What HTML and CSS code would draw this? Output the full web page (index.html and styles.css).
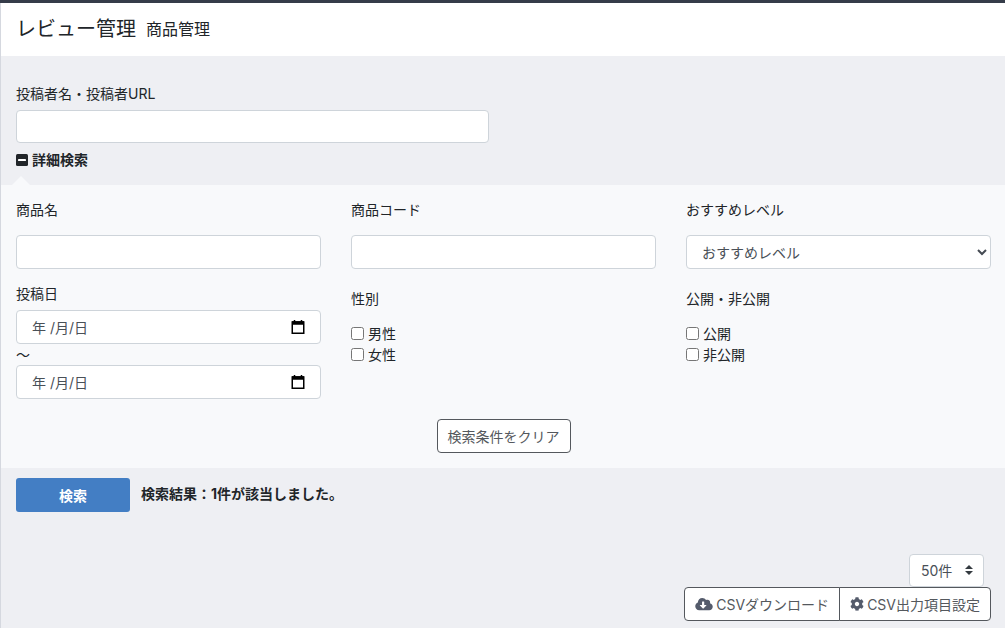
FILE: index.html
```html
<!DOCTYPE html>
<html lang="ja">
<head>
<meta charset="utf-8">
<meta name="viewport" content="width=device-width, initial-scale=1">
<title>レビュー管理</title>
<link rel="stylesheet" href="styles.css">
</head>
<body>
<header class="page-head">
  <h1 class="page-title">レビュー管理</h1>
  <span class="page-subtitle">商品管理</span>
</header>
<main>
  <form class="search">
    <section class="search-main">
      <label class="label" for="author">投稿者名・投稿者URL</label>
      <input class="control author" id="author" type="text">
      <button class="toggle" type="button">
        <svg class="toggle-icon" viewBox="0 0 12 12" aria-hidden="true"><rect width="12" height="12" rx="1.5" fill="#212529"/><rect x="2" y="5" width="8" height="2" rx=".4" fill="#fff"/></svg>
        詳細検索
      </button>
    </section>
    <section class="detail">
      <div class="grid">
        <div class="field">
          <label class="label" for="name">商品名</label>
          <input class="control" id="name" type="text">
        </div>
        <div class="field">
          <label class="label" for="code">商品コード</label>
          <input class="control" id="code" type="text">
        </div>
        <div class="field">
          <label class="label" for="level">おすすめレベル</label>
          <div class="select-wrap">
            <select class="control level" id="level"><option>おすすめレベル</option></select>
            <svg class="chevron" viewBox="0 0 10 7" aria-hidden="true"><path d="M1 1l4 4 4-4" fill="none" stroke="#454b53" stroke-width="2"/></svg>
          </div>
        </div>
        <div class="dates">
          <label class="label" for="from">投稿日</label>
          <div class="date">
            <input class="control" id="from" type="text" placeholder="年 /月/日">
            <button class="calendar" type="button" aria-label="開始日を選択"><svg viewBox="0 0 14 15" aria-hidden="true"><path d="M3.500 0v2M10.500 0v2" stroke="#000" stroke-width="1.500"/><path d="M1.250 2h11.500v11.250H1.250z" fill="none" stroke="#000" stroke-width="1.500"/><path d="M1 1.250h12v3.500H1z"/></svg></button>
          </div>
          <span class="tilde">〜</span>
          <div class="date">
            <input class="control" type="text" placeholder="年 /月/日" aria-label="投稿日（終了）">
            <button class="calendar" type="button" aria-label="終了日を選択"><svg viewBox="0 0 14 15" aria-hidden="true"><path d="M3.500 0v2M10.500 0v2" stroke="#000" stroke-width="1.500"/><path d="M1.250 2h11.500v11.250H1.250z" fill="none" stroke="#000" stroke-width="1.500"/><path d="M1 1.250h12v3.500H1z"/></svg></button>
          </div>
        </div>
        <fieldset class="checks">
          <legend class="label">性別</legend>
          <label class="check"><input type="checkbox">男性</label>
          <label class="check"><input type="checkbox">女性</label>
        </fieldset>
        <fieldset class="checks">
          <legend class="label">公開・非公開</legend>
          <label class="check"><input type="checkbox">公開</label>
          <label class="check"><input type="checkbox">非公開</label>
        </fieldset>
      </div>
      <button class="btn clear" type="reset">検索条件をクリア</button>
    </section>
    <div class="submit-row">
      <button class="submit" type="button">検索</button>
      <span class="result">検索結果：1件が該当しました。</span>
    </div>
  </form>
  <section class="tools">
    <div class="select-wrap count-wrap">
      <select class="count" aria-label="表示件数"><option>50件</option></select>
      <svg class="sorter" viewBox="0 0 8 10" aria-hidden="true"><path d="M4 0l4 4H0zM4 10l4-4H0z" fill="#343a40"/></svg>
    </div>
    <div class="group">
      <button class="btn" type="button">
        <svg class="cloud" viewBox="0 0 640 512" aria-hidden="true"><path fill="#545b6b" d="M537.600 226.600c4.100-10.700 6.400-22.400 6.400-34.600 0-53-43-96-96-96-19.700 0-38.100 6-53.300 16.200C367 64.200 315.300 32 256 32c-88.400 0-160 71.600-160 160 0 2.700.1 5.400.2 8.100C40.200 219.800 0 273.200 0 336c0 79.500 64.500 144 144 144h368c70.700 0 128-57.300 128-128 0-61.900-44-113.600-102.400-125.400zm-132.900 88.700L299.300 420.700c-6.200 6.200-16.400 6.200-22.600 0L171.300 315.300c-10.100-10.100-2.900-27.300 11.300-27.300H248V176c0-8.800 7.200-16 16-16h48c8.800 0 16 7.200 16 16v112h65.400c14.200 0 21.400 17.200 11.300 27.300z"/></svg>CSVダウンロード
      </button>
      <button class="btn" type="button">
        <svg class="gear" viewBox="0 0 512 512" aria-hidden="true"><path fill="#545b6b" d="M487.400 315.700l-42.600-24.600c4.300-23.200 4.300-47 0-70.200l42.600-24.600c4.900-2.800 7.100-8.600 5.500-14-11.100-35.600-30-67.800-54.700-94.600-3.800-4.100-10-5.100-14.800-2.300L380.800 110c-17.900-15.400-38.500-27.300-60.800-35.100V25.800c0-5.600-3.900-10.500-9.400-11.700-36.700-8.200-74.300-7.800-109.200 0-5.500 1.200-9.400 6.100-9.400 11.700V75c-22.200 7.900-42.800 19.800-60.800 35.100L88.700 85.500c-4.900-2.800-11-1.900-14.800 2.300-24.700 26.700-43.600 58.900-54.700 94.600-1.700 5.400.6 11.200 5.500 14L67.300 221c-4.300 23.200-4.300 47 0 70.200l-42.600 24.600c-4.900 2.800-7.100 8.600-5.500 14 11.100 35.600 30 67.800 54.700 94.600 3.800 4.100 10 5.100 14.800 2.300l42.600-24.600c17.900 15.400 38.500 27.300 60.800 35.100v49.200c0 5.600 3.900 10.500 9.400 11.700 36.700 8.200 74.300 7.800 109.200 0 5.500-1.200 9.400-6.100 9.400-11.700v-49.200c22.200-7.900 42.800-19.800 60.800-35.100l42.600 24.600c4.900 2.800 11 1.900 14.800-2.300 24.700-26.700 43.600-58.900 54.700-94.600 1.500-5.500-.7-11.300-5.600-14.100zM256 336c-44.100 0-80-35.900-80-80s35.900-80 80-80 80 35.900 80 80-35.900 80-80 80z"/></svg>CSV出力項目設定
      </button>
    </div>
  </section>
</main>
</body>
</html>
```

FILE: styles.css
```css
* { box-sizing: border-box; }
body {
  margin: 0;
  min-height: 100vh;
  border-top: 3px solid #353c49;
  background: #eeeff3;
  box-shadow: inset 1px 0 #d5d8df;
  color: #212529;
  font: 14px/21px Inter, "Noto Sans CJK JP", sans-serif;
}
button, input, select { font: inherit; color: inherit; }
button { cursor: pointer; }
.page-head {
  display: flex;
  align-items: center;
  gap: 10px;
  margin-left: 1px;
  padding: 11px 15px 12px;
  background: #fff;
}
.page-title { margin: 0; font-size: 20px; line-height: 30px; font-weight: 400; }
.page-subtitle { font-size: 16px; }
.label { display: block; padding: 0; }
.control {
  display: block;
  width: 100%;
  height: 34px;
  padding: 0 15px;
  border: 1px solid #ced4da;
  border-radius: 4px;
  background: #fff;
  color: #495057;
}
.control::placeholder { color: #495057; opacity: 1; }
.search-main { padding: 27px 16px 15px; }
.author { width: 50%; max-width: 473px; height: 33px; margin: 6px 0; }
.toggle {
  display: flex;
  align-items: center;
  gap: 4px;
  padding: 0;
  border: 0;
  background: none;
  font-weight: 700;
}
.toggle-icon { width: 12px; height: 12px; }
.detail {
  position: relative;
  margin-left: 1px;
  padding: 14px 14px 15px 15px;
  background: #f8f9fb;
}
.detail::before {
  content: "";
  position: absolute;
  left: 11px;
  bottom: 100%;
  border: 9px solid transparent;
  border-top: 0;
  border-bottom-color: #f8f9fb;
}
.grid {
  display: grid;
  grid-template-columns: repeat(3, 1fr);
  column-gap: 30px;
  row-gap: 14px;
}
.field .label { margin-bottom: 15px; }
.select-wrap { position: relative; }
.level, .count { appearance: none; }
.chevron {
  position: absolute;
  right: 4px;
  top: 14px;
  width: 10px;
  height: 7px;
  pointer-events: none;
}
.dates .label { margin-bottom: 6px; }
.date { position: relative; }
.calendar {
  position: absolute;
  right: 16px;
  top: 10px;
  width: 14px;
  height: 15px;
  padding: 0;
  border: 0;
  background: none;
}
.calendar svg { display: block; }
.tilde { display: block; }
.checks { margin: 0; padding: 5px 0 0; border: 0; min-width: 0; }
.checks legend { float: left; width: 100%; margin-bottom: 14px; }
.check { display: flex; align-items: center; gap: 4px; clear: both; }
.check input { width: 13px; height: 13px; margin: 0; }
.btn {
  height: 34px;
  padding: 0 10px;
  border: 1px solid #54585d;
  border-radius: 4px;
  background: #fff;
  color: #54585d;
  white-space: nowrap;
}
.clear { display: block; margin: 20px auto 0; }
.submit-row { display: flex; align-items: flex-start; gap: 11px; padding: 10px 16px; }
.submit {
  width: 114px;
  height: 34px;
  border: 0;
  border-radius: 3px;
  background: #437ec4;
  color: #fff;
  font-weight: 700;
}
.result { padding-top: 5px; font-weight: 700; }
.tools {
  display: flex;
  flex-direction: column;
  align-items: flex-end;
  padding: 32px 14px 7px;
}
.count-wrap { margin-right: 7px; }
.count {
  display: block;
  width: 75px;
  height: 33px;
  padding: 0 11px;
  border: 1px solid #ced4da;
  border-radius: 4px;
  background: #fff;
  color: #495057;
}
.sorter {
  position: absolute;
  right: 11px;
  top: 11px;
  width: 8px;
  height: 10px;
  pointer-events: none;
}
.group { display: flex; }
.group .btn { display: flex; align-items: center; gap: 3px; }
.group .btn:first-child { border-radius: 4px 0 0 4px; }
.group .btn:last-child { margin-left: -1px; border-radius: 0 4px 4px 0; }
.cloud { width: 18px; height: 14px; }
.gear { width: 14px; height: 14px; }
```
